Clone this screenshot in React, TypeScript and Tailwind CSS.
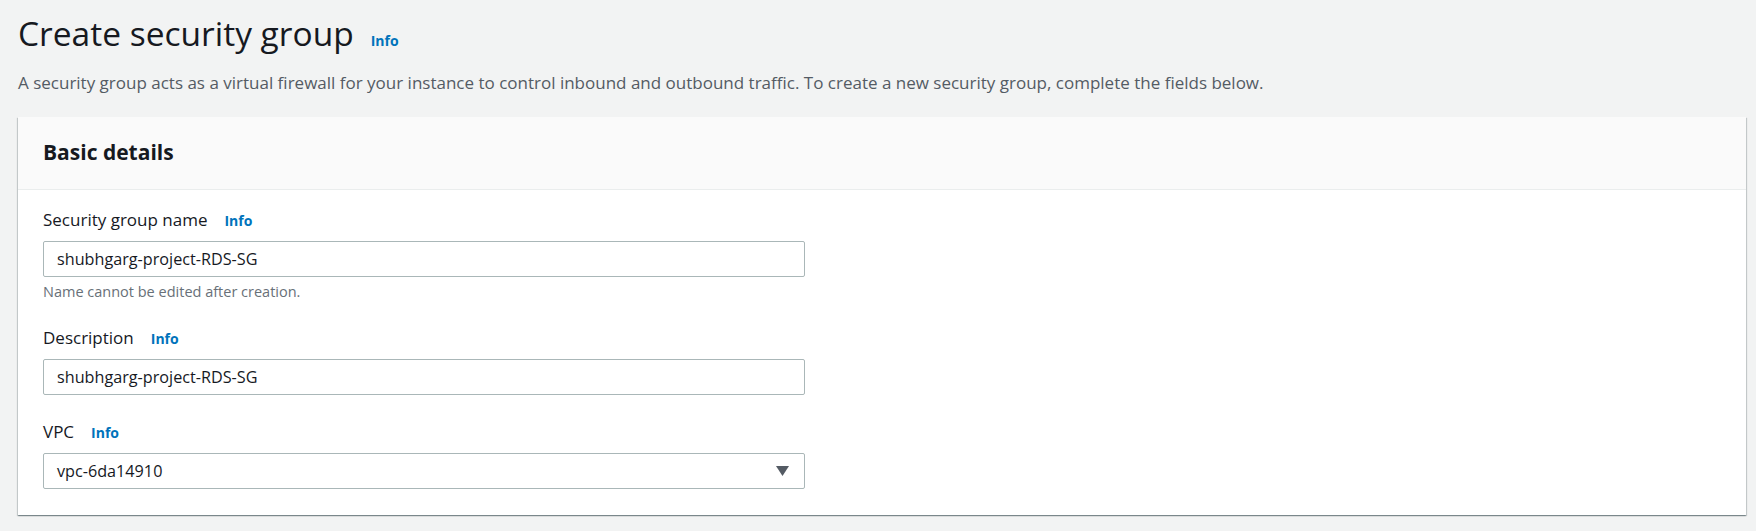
import React from "react";

function InfoLink() {
    return <a className="text-[14px] font-bold text-[#0073bb] ml-[17px] cursor-pointer">Info</a>;
}

function Field({ label, children, hint }: { label: string; children: React.ReactNode; hint?: string }) {
    return (
        <div className="mb-[26px] last:mb-0">
            <div className="flex items-baseline h-[22px] leading-[22px] mb-[10px]">
                <span className="text-[17px] text-[#16191f]">{label}</span>
                <InfoLink />
            </div>
            {children}
            {hint && <div className="text-[14.5px] text-[#687078] mt-[6px] leading-[18px]">{hint}</div>}
        </div>
    );
}

const inputCls = "w-[762px] h-[36px] border border-[#aab7b8] rounded-[2px] flex items-center text-[16.2px] text-[#16191f]";

export default function App() {
    return (
        <div
            className="min-h-[531px] bg-[#f2f3f3] pl-[18px] pr-[10px] pt-[10px]"
            style={{ fontFamily: '"Open Sans", "Noto Sans", Arial, sans-serif' }}
        >
            <div className="flex items-baseline">
                <h1 className="text-[33.5px] leading-[46px] text-[#16191f] font-normal">Create security group</h1>
                <InfoLink />
            </div>
            <p className="text-[17px] text-[#545b64] mt-[15px] leading-[24px]">
                A security group acts as a virtual firewall for your instance to control inbound and outbound traffic. To create a new security group, complete the fields below.
            </p>
            <div className="mt-[22px] bg-white shadow-[0_1px_1px_0_rgba(0,28,36,0.3),1px_1px_1px_0_rgba(0,28,36,0.15),-1px_1px_1px_0_rgba(0,28,36,0.15)]">
                <div className="bg-[#fafafa] border-b border-[#eaeded] h-[73px] px-[25px] flex items-center">
                    <h2 className="text-[21px] font-bold text-[#16191f]">Basic details</h2>
                </div>
                <div className="px-[25px] pt-[19px] pb-[26px]">
                    <Field label="Security group name" hint="Name cannot be edited after creation.">
                        <div className={inputCls + " px-[13px]"}>shubhgarg-project-RDS-SG</div>
                    </Field>
                    <Field label="Description">
                        <div className={inputCls + " px-[13px]"}>shubhgarg-project-RDS-SG</div>
                    </Field>
                    <Field label="VPC">
                        <div className={inputCls + " pl-[13px] pr-[15px] justify-between"}>
                            <span>vpc-6da14910</span>
                            <svg width="13" height="10" viewBox="0 0 13 10">
                                <path d="M0 0 H13 L6.5 10 Z" fill="#545b64" />
                            </svg>
                        </div>
                    </Field>
                </div>
            </div>
        </div>
    );
}
